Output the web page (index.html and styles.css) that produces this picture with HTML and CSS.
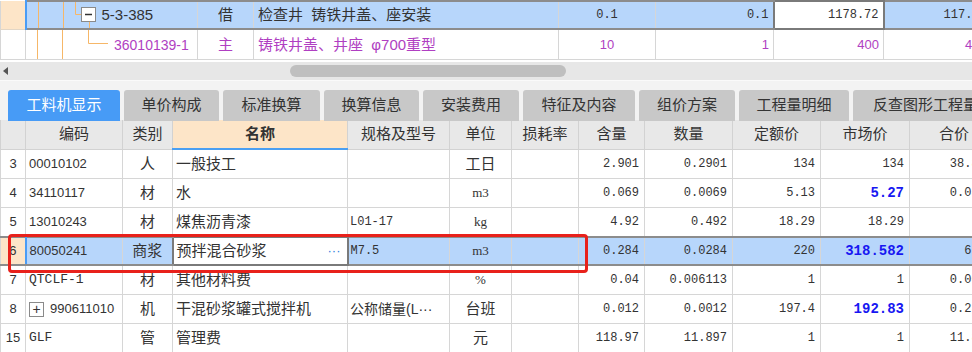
FILE: index.html
```html
<!DOCTYPE html>
<html lang="zh-CN">

<head>
    <meta charset="UTF-8">
    <title>工料机显示</title>
    <link rel="stylesheet" href="styles.css">
</head>

<body>
    <table class="top">
        <colgroup>
            <col><col><col><col><col><col><col><col>
        </colgroup>
        <tr class="cur">
            <td class="idx"></td>
            <td class="tree">
                <div class="tree-cell">
                    <svg width="75" height="26" viewBox="0 2 75 26">
                        <g stroke="#f6b768" stroke-width="1" fill="none">
                            <line x1="11.5" y1="0" x2="11.5" y2="30" />
                            <line x1="36.5" y1="0" x2="36.5" y2="30" />
                            <polyline points="48.5,0 48.5,14.5 54,14.5" />
                            <line x1="62.5" y1="21" x2="62.5" y2="30" />
                        </g>
                        <rect x="54.5" y="7.5" width="14" height="14" fill="#fff" stroke="#8a8a8a" />
                        <line x1="58" y1="14.5" x2="65" y2="14.5" stroke="#333" stroke-width="1.5" />
                    </svg>
                    <span>5-3-385</span>
                </div>
            </td>
            <td class="c">借</td>
            <td>检查井&nbsp;&nbsp;铸铁井盖、座安装</td>
            <td class="num c">0.1</td>
            <td class="num r">0.1</td>
            <td class="num r edit">1178.72</td>
            <td class="num r">117.872</td>
        </tr>
        <tr class="sub">
            <td class="idx"></td>
            <td class="tree">
                <div class="tree-cell">
                    <svg width="88" height="29" viewBox="0 0 88 29">
                        <g stroke="#f6b768" stroke-width="1" fill="none">
                            <line x1="11.5" y1="0" x2="11.5" y2="29" />
                            <line x1="36.5" y1="0" x2="36.5" y2="29" />
                            <polyline points="62.5,0 62.5,13.5 82,13.5" />
                        </g>
                    </svg>
                    <span class="code">36010139-1</span>
                </div>
            </td>
            <td class="c">主</td>
            <td>铸铁井盖、井座&nbsp;&nbsp;φ700重型</td>
            <td class="c">10</td>
            <td class="r">1</td>
            <td class="r">400</td>
            <td class="r">4000</td>
        </tr>
    </table>

    <div class="hscroll">
        <span class="arrow"></span>
        <span class="thumb"></span>
    </div>

    <div class="tabs">
        <div class="tab active">工料机显示</div>
        <div class="tab">单价构成</div>
        <div class="tab">标准换算</div>
        <div class="tab">换算信息</div>
        <div class="tab">安装费用</div>
        <div class="tab">特征及内容</div>
        <div class="tab">组价方案</div>
        <div class="tab">工程量明细</div>
        <div class="tab last">反查图形工程量</div>
    </div>

    <table class="grid">
        <colgroup>
            <col><col><col><col><col><col><col><col><col><col><col><col>
        </colgroup>
        <tr>
            <th></th>
            <th>编码</th>
            <th>类别</th>
            <th class="name-head">名称</th>
            <th>规格及型号</th>
            <th>单位</th>
            <th>损耗率</th>
            <th>含量</th>
            <th>数量</th>
            <th>定额价</th>
            <th>市场价</th>
            <th>合价</th>
        </tr>
        <tr>
            <td class="idx">3</td>
            <td class="code">00010102</td>
            <td class="c">人</td>
            <td class="name">一般技工</td>
            <td class="spec"></td>
            <td class="c">工日</td>
            <td></td>
            <td class="num r">2.901</td>
            <td class="num r">0.2901</td>
            <td class="num r">134</td>
            <td class="num r">134</td>
            <td class="num r">38.874</td>
        </tr>
        <tr>
            <td class="idx">4</td>
            <td class="code">34110117</td>
            <td class="c">材</td>
            <td class="name">水</td>
            <td class="spec"></td>
            <td class="c unit">m3</td>
            <td></td>
            <td class="num r">0.069</td>
            <td class="num r">0.0069</td>
            <td class="num r">5.13</td>
            <td class="num r hot">5.27</td>
            <td class="num r">0.0364</td>
        </tr>
        <tr>
            <td class="idx">5</td>
            <td class="code">13010243</td>
            <td class="c">材</td>
            <td class="name">煤焦沥青漆</td>
            <td class="spec num">L01-17</td>
            <td class="c unit">kg</td>
            <td></td>
            <td class="num r">4.92</td>
            <td class="num r">0.492</td>
            <td class="num r">18.29</td>
            <td class="num r">18.29</td>
            <td class="num r"></td>
        </tr>
        <tr class="sel">
            <td class="idx">6</td>
            <td class="code">80050241</td>
            <td class="c">商浆</td>
            <td class="name edit">
                <div class="name-edit">
                    <span>预拌混合砂浆</span>
                    <span class="more">···</span>
                </div>
            </td>
            <td class="spec num">M7.5</td>
            <td class="c unit">m3</td>
            <td></td>
            <td class="num r">0.284</td>
            <td class="num r">0.0284</td>
            <td class="num r">220</td>
            <td class="num r hot">318.582</td>
            <td class="num r">6.25</td>
        </tr>
        <tr>
            <td class="idx">7</td>
            <td class="code num">QTCLF-1</td>
            <td class="c">材</td>
            <td class="name">其他材料费</td>
            <td class="spec"></td>
            <td class="c unit">%</td>
            <td></td>
            <td class="num r">0.04</td>
            <td class="num r">0.006113</td>
            <td class="num r">1</td>
            <td class="num r">1</td>
            <td class="num r">0.0061</td>
        </tr>
        <tr>
            <td class="idx">8</td>
            <td class="code"><span class="plus">+</span>990611010</td>
            <td class="c">机</td>
            <td class="name">干混砂浆罐式搅拌机</td>
            <td class="spec">公称储量(L···</td>
            <td class="c">台班</td>
            <td></td>
            <td class="num r">0.012</td>
            <td class="num r">0.0012</td>
            <td class="num r">197.4</td>
            <td class="num r hot">192.83</td>
            <td class="num r">0.2314</td>
        </tr>
        <tr>
            <td class="idx">15</td>
            <td class="code num">GLF</td>
            <td class="c">管</td>
            <td class="name">管理费</td>
            <td class="spec"></td>
            <td class="c">元</td>
            <td></td>
            <td class="num r">118.97</td>
            <td class="num r">11.897</td>
            <td class="num r">1</td>
            <td class="num r">1</td>
            <td class="num r">11.897</td>
        </tr>
    </table>

    <div class="mark"></div>
</body>

</html>
```

FILE: styles.css
```css
body {
    margin: 0;
    width: 972px;
    height: 352px;
    overflow: hidden;
    position: relative;
    background-color: #ffffff;
    color: #333333;
    font-family: "Liberation Sans", "Noto Sans CJK SC", sans-serif;
    font-size: 15px;
}

table {
    border-collapse: collapse;
    table-layout: fixed;
}

td, th {
    padding: 0 4px;
    white-space: nowrap;
    overflow: hidden;
    line-height: 20px;
}

.c {
    text-align: center;
}

.r {
    text-align: right;
}

.num {
    font-family: "Liberation Mono", "Noto Sans CJK SC", monospace;
    font-size: 12px;
}

/* upper tree grid */
.top {
    width: 998px;
}

.top col:nth-child(1) { width: 25px; }
.top col:nth-child(2) { width: 172px; }
.top col:nth-child(3) { width: 56px; }
.top col:nth-child(4) { width: 305px; }
.top col:nth-child(5) { width: 97px; }
.top col:nth-child(6) { width: 118px; }
.top col:nth-child(7) { width: 110px; }
.top col:nth-child(8) { width: 115px; }

.top td {
    height: 29px;
    border: 1px solid #d6d6d6;
    border-top: none;
}

.top td.tree {
    padding: 0;
}

.tree-cell {
    display: flex;
    align-items: center;
}

.tree-cell svg {
    display: block;
    flex: none;
}

.cur td {
    height: 26px;
    background-color: #b7d6fb;
    border-top: 2px solid #8c8c8c;
    border-bottom: 2px solid #8c8c8c;
}

.cur td.idx {
    background-color: #fde5c8;
    border-top: none;
    border-bottom: 1px solid #e2d6c6;
    border-right: 2px solid #4a9cf5;
}

.cur td.edit {
    background-color: #ffffff;
    border: 2px solid #7a7a7a;
}

.cur .num {
    color: #333333;
}

.sub td {
    color: #b03fc2;
}

.sub td:nth-child(n+5) {
    font-size: 13px;
}

.sub .code {
    font-size: 14px;
}

/* scrollbar */
.hscroll {
    margin-top: 2px;
    height: 18px;
    background-color: #e7e7e7;
    display: flex;
    align-items: center;
}

.arrow {
    width: 0;
    height: 0;
    margin-left: 3px;
    border-top: 4px solid transparent;
    border-bottom: 4px solid transparent;
    border-right: 5px solid #555555;
}

.thumb {
    margin-left: 282px;
    width: 276px;
    height: 12px;
    border-radius: 6px;
    background-color: #bfbfbf;
}

/* tabs */
.tabs {
    height: 40px;
    box-sizing: border-box;
    padding: 9px 0 0 8px;
    background-color: #f3f3f3;
    border-top: 1px solid #fafafa;
    display: flex;
    gap: 4px;
}

.tab {
    flex: none;
    height: 31px;
    line-height: 30px;
    text-align: center;
    font-size: 15px;
    color: #333333;
    background-color: #c8c8c8;
    border-radius: 3px 3px 0 0;
}

.tab:nth-child(1) { width: 112px; }
.tab:nth-child(2) { width: 95px; }
.tab:nth-child(3) { width: 97px; }
.tab:nth-child(4) { width: 95px; }
.tab:nth-child(5) { width: 96px; }
.tab:nth-child(6) { width: 112px; }
.tab:nth-child(7) { width: 96px; }
.tab:nth-child(8) { width: 110px; }

.tab.last {
    width: 140px;
    text-align: left;
    padding-left: 20px;
    box-sizing: border-box;
}

.tab.active {
    background-color: #479bf6;
    color: #ffffff;
}

/* material grid */
.grid {
    width: 998px;
}

.grid col:nth-child(1) { width: 25px; }
.grid col:nth-child(2) { width: 97px; }
.grid col:nth-child(3) { width: 50px; }
.grid col:nth-child(4) { width: 175px; }
.grid col:nth-child(5) { width: 102px; }
.grid col:nth-child(6) { width: 62px; }
.grid col:nth-child(7) { width: 67px; }
.grid col:nth-child(8) { width: 66px; }
.grid col:nth-child(9) { width: 88px; }
.grid col:nth-child(10) { width: 88px; }
.grid col:nth-child(11) { width: 89px; }
.grid col:nth-child(12) { width: 89px; }

.grid th {
    height: 28px;
    font-weight: normal;
    background-color: #e8e8e8;
    border: 1px solid #d2d2d2;
    border-top: none;
}

.grid th.name-head {
    background-color: #fde5c8;
    font-weight: bold;
    border-bottom: 2px solid #4a9ff2;
}

.grid td {
    height: 28px;
    border: 1px solid #d6d6d6;
}

.grid td.idx {
    padding: 0;
    text-align: center;
    font-size: 13px;
}

.grid td.code {
    padding-left: 3px;
    font-size: 13px;
}

.grid td.name {
    padding-left: 3px;
}

.grid td.spec {
    padding-left: 2px;
}

.grid td.spec:not(.num) {
    font-size: 14px;
}

.grid td.num.r {
    padding-right: 5px;
}

.unit {
    font-family: "Liberation Serif", serif;
    font-size: 13px;
}

.hot {
    color: #1717f2;
    font-weight: bold;
    font-size: 14px !important;
}

.plus {
    display: inline-block;
    width: 13px;
    height: 13px;
    line-height: 12px;
    margin-right: 6px;
    text-align: center;
    vertical-align: -1px;
    border: 1px solid #8a8a8a;
    font-size: 14px;
}

.sel td {
    height: 26px;
    background-color: #b7d6fb;
    border-top: 2px solid #8c8c8c;
    border-bottom: 2px solid #8c8c8c;
}

.sel td.idx {
    background-color: #fde5c8;
    border-right: 2px solid #4a9cf5;
}

.sel td.edit {
    background-color: #ffffff;
    border: 2px solid #7a7a7a;
}

.name-edit {
    display: flex;
    justify-content: space-between;
    align-items: center;
}

.more {
    color: #2f7fe0;
    font-size: 13px;
    padding-right: 2px;
}

/* red annotation frame over the selected row */
.mark {
    position: absolute;
    left: 8px;
    top: 234px;
    width: 580px;
    height: 39px;
    box-sizing: border-box;
    border: 3px solid #e8211b;
    border-radius: 4px;
}
```
